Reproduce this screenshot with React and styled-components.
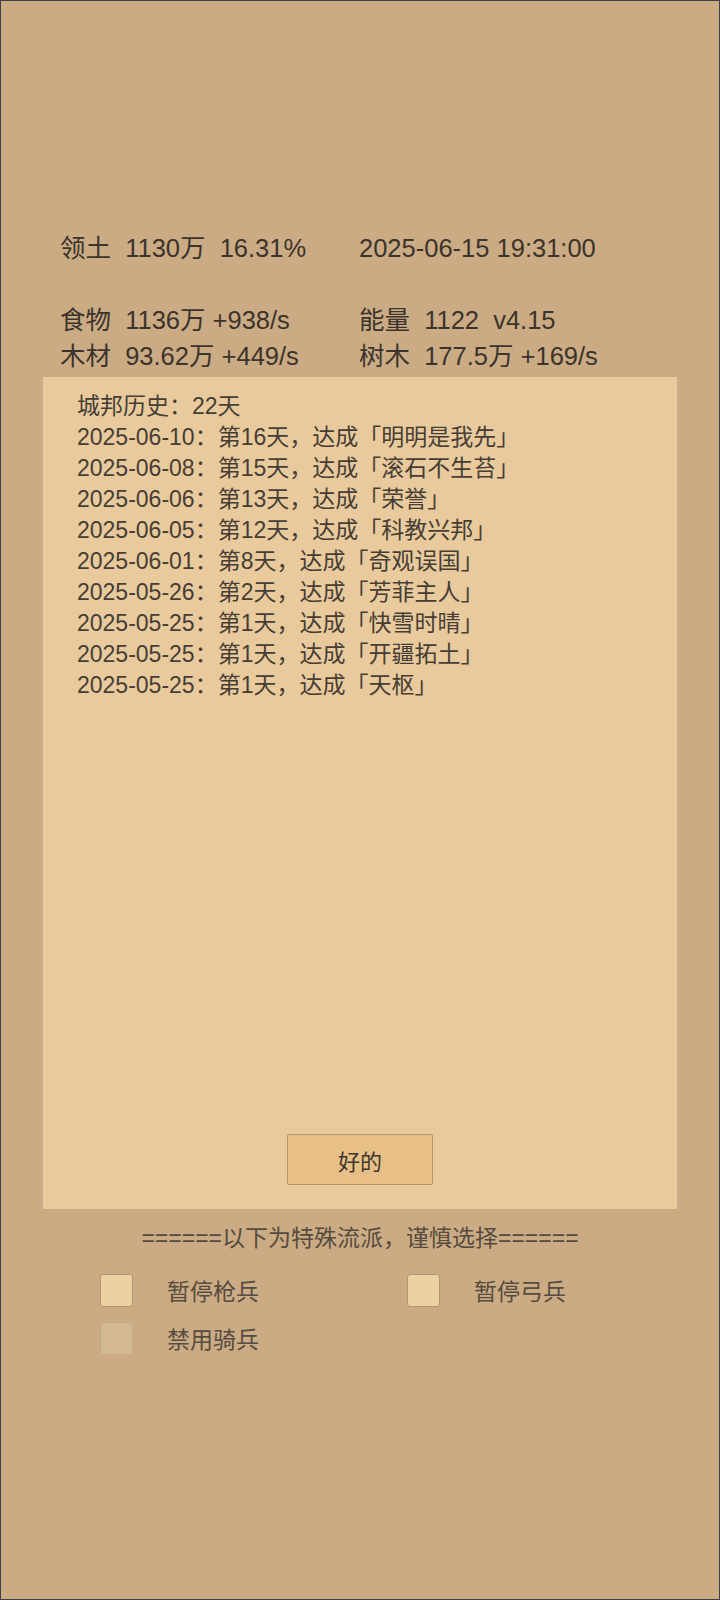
import React from 'react';
import styled, { createGlobalStyle } from 'styled-components';

const GlobalStyle = createGlobalStyle`
  html, body {
    margin: 0;
    padding: 0;
    background: #caab83;
  }
  * {
    box-sizing: border-box;
  }
`;

const Frame = styled.div`
  width: 720px;
  height: 1600px;
  background: #caab83;
  border: 1px solid #3d4246;
  display: flex;
  flex-direction: column;
  padding-top: 229px;
  font-family: 'Liberation Sans', 'Noto Sans CJK SC', sans-serif;
  color: #3b342c;
`;

const Stats = styled.div`
  display: grid;
  grid-template-columns: 299px 1fr;
  padding-left: 59px;
  font-size: 25.5px;
  line-height: 36px;
  white-space: pre;
`;

const Stat = styled.div`
  min-height: 36px;
`;

const Panel = styled.div`
  margin: 3px 0 0 42px;
  width: 634px;
  height: 832px;
  background: #e9ca9d;
  display: flex;
  flex-direction: column;
  padding: 14px 0 24px;
  font-size: 23px;
  line-height: 31px;
  color: #463e35;
`;

const History = styled.div`
  padding-left: 34px;
`;

const Line = styled.div`
  white-space: pre;
`;

const OkButton = styled.button`
  margin-top: auto;
  align-self: center;
  width: 146px;
  height: 51px;
  background: #e8bf86;
  border: 1px solid #b3946b;
  border-radius: 2px;
  font-family: inherit;
  font-size: 22px;
  color: #3f372e;
  padding: 0;
`;

const Divider = styled.div`
  margin-top: 14px;
  text-align: center;
  font-size: 23px;
  line-height: 30px;
  color: #564b3e;
`;

const Options = styled.div`
  display: grid;
  grid-template-columns: 307px 307px;
  row-gap: 14px;
  padding-left: 99px;
  margin-top: 20px;
`;

const Option = styled.label`
  display: flex;
  align-items: center;
  gap: 34px;
  font-size: 23px;
  color: #574c40;
`;

const Box = styled.span`
  width: 33px;
  height: 33px;
  border-radius: 3px;
  border: 1px solid ${(p) => (p.disabled ? '#c3a985' : '#b3976f')};
  background: ${(p) => (p.disabled ? '#d2b893' : '#ecd1a2')};
`;

const stats = [
  ['领土  1130万  16.31%', '2025-06-15 19:31:00'],
  ['', ''],
  ['食物  1136万 +938/s', '能量  1122  v4.15'],
  ['木材  93.62万 +449/s', '树木  177.5万 +169/s'],
];

const history = [
  '城邦历史：22天',
  '2025-06-10：第16天，达成「明明是我先」',
  '2025-06-08：第15天，达成「滚石不生苔」',
  '2025-06-06：第13天，达成「荣誉」',
  '2025-06-05：第12天，达成「科教兴邦」',
  '2025-06-01：第8天，达成「奇观误国」',
  '2025-05-26：第2天，达成「芳菲主人」',
  '2025-05-25：第1天，达成「快雪时晴」',
  '2025-05-25：第1天，达成「开疆拓土」',
  '2025-05-25：第1天，达成「天枢」',
];

const options = [
  { label: '暂停枪兵' },
  { label: '暂停弓兵' },
  { label: '禁用骑兵', disabled: true },
];

export default function App() {
  return (
    <>
      <GlobalStyle />
      <Frame>
        <Stats>
          {stats.map(([left, right], i) => (
            <React.Fragment key={i}>
              <Stat>{left}</Stat>
              <Stat>{right}</Stat>
            </React.Fragment>
          ))}
        </Stats>
        <Panel>
          <History>
            {history.map((text, i) => (
              <Line key={i}>{text}</Line>
            ))}
          </History>
          <OkButton>好的</OkButton>
        </Panel>
        <Divider>======以下为特殊流派，谨慎选择======</Divider>
        <Options>
          {options.map((o) => (
            <Option key={o.label}>
              <Box disabled={o.disabled} />
              {o.label}
            </Option>
          ))}
        </Options>
      </Frame>
    </>
  );
}
